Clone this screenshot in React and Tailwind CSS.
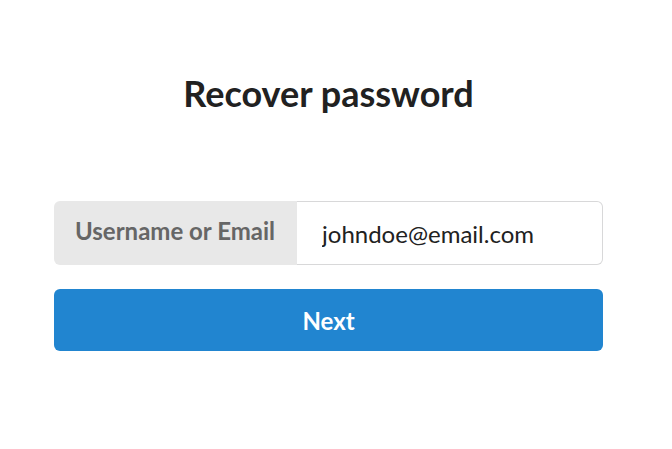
import React from "react";

export default function App() {
  return (
    <main className="min-h-screen bg-white pt-[70px] pr-[69px] pb-10 pl-[54px] font-['Lato',sans-serif] text-[#212121]">
      <h1 className="text-center text-[36px] leading-[46px] font-bold">Recover password</h1>
      <form className="mt-[85px] flex flex-col gap-6" onSubmit={(e) => e.preventDefault()}>
        <div className="flex h-16">
          <label
            htmlFor="login"
            className="flex shrink-0 items-center rounded-l-[6px] bg-[#e8e8e8] pr-[22px] pb-1 pl-[21px] text-2xl font-bold text-[#666666]"
          >
            Username or Email
          </label>
          <input
            id="login"
            type="text"
            defaultValue="johndoe@email.com"
            className="min-w-0 flex-1 rounded-r-[6px] border border-l-0 border-[#d8d8d9] bg-white px-[25px] pt-0.5 text-2xl text-[#212121] outline-none"
          />
        </div>
        <button type="submit" className="h-[62px] rounded-[6px] bg-[#2185d0] pt-0.5 text-2xl font-bold text-white">
          Next
        </button>
      </form>
    </main>
  );
}
